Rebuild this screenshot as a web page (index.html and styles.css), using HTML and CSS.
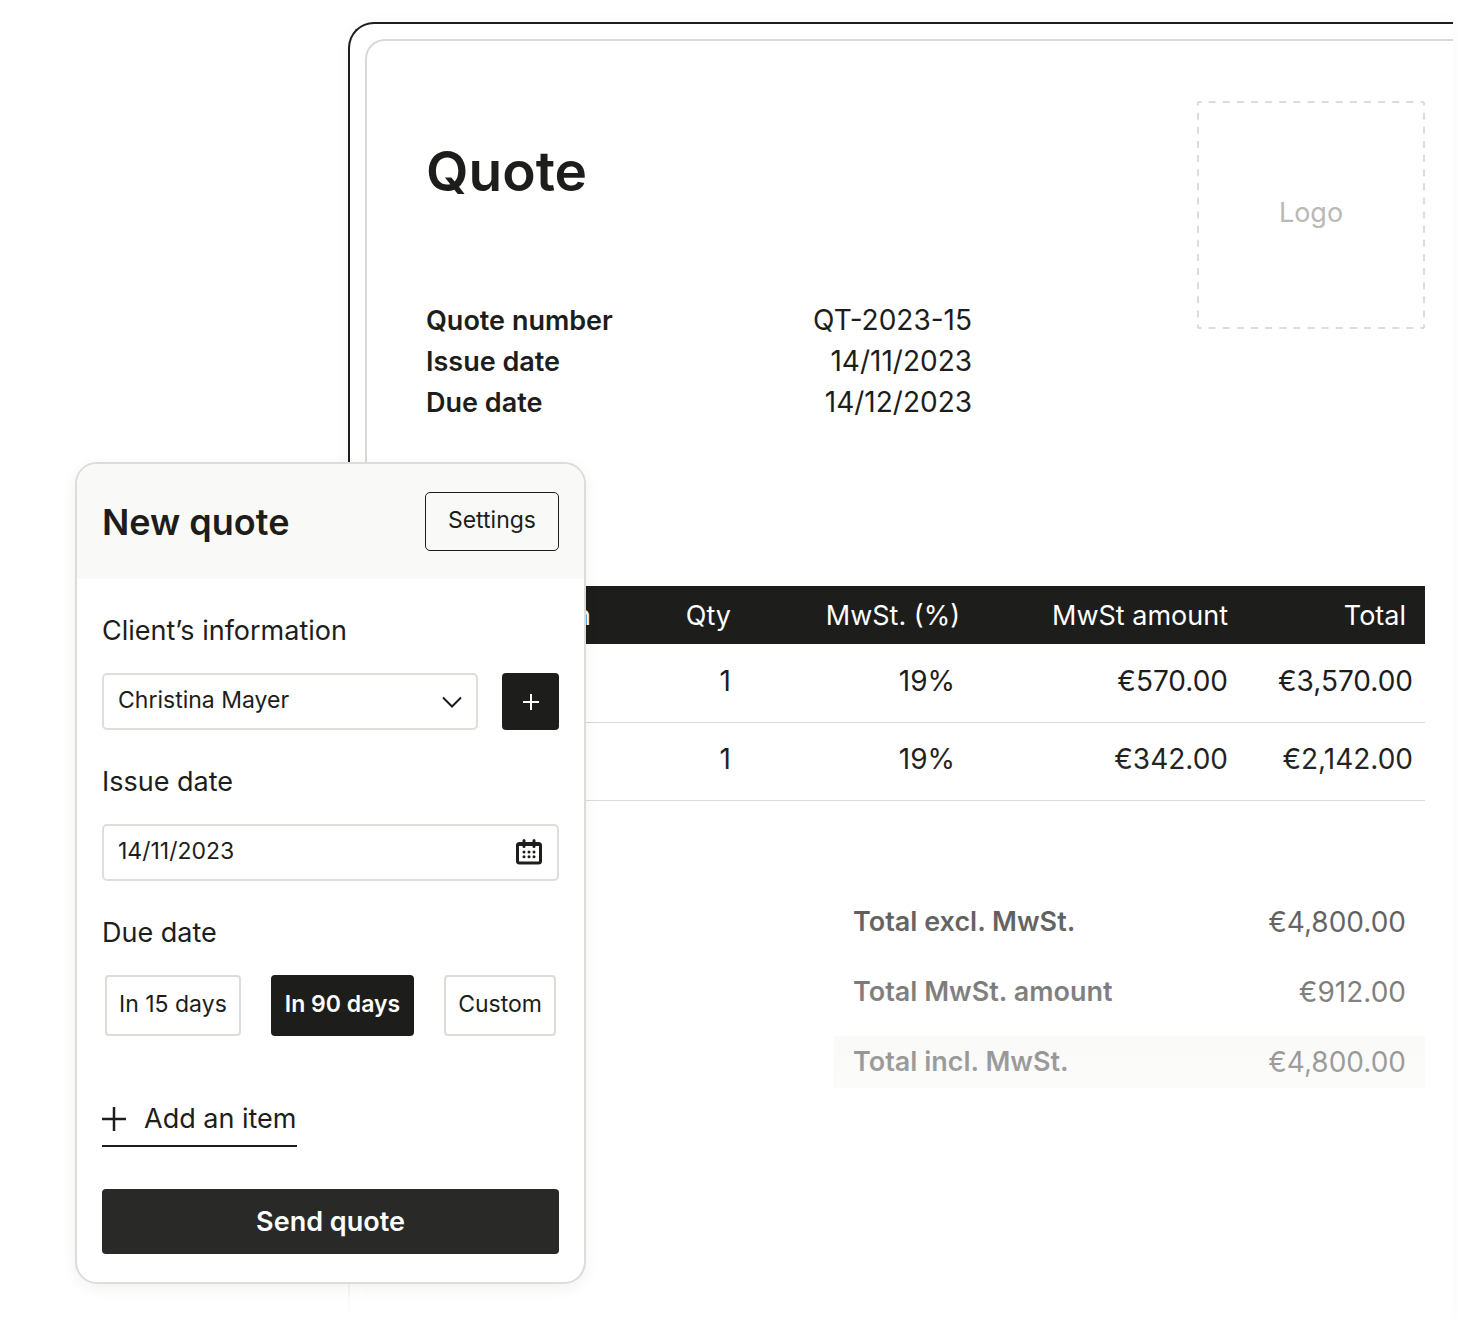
FILE: index.html
```html
<!DOCTYPE html>
<html lang="en">
  <head>
    <meta charset="utf-8">
    <title>New quote</title>
    <link rel="stylesheet" href="styles.css">
  </head>

  <body>
    <div class="stage">

      <main class="sheet">
        <div class="page">

          <div class="page-top">
            <div class="intro">
              <h1>Quote</h1>
              <dl class="details">
                <div><dt>Quote number</dt><dd>QT-2023-15</dd></div>
                <div><dt>Issue date</dt><dd>14/11/2023</dd></div>
                <div><dt>Due date</dt><dd>14/12/2023</dd></div>
              </dl>
            </div>
            <div class="logo-box">
              <svg class="logo-frame" viewBox="0 0 228 228" aria-hidden="true">
                <path d="M1 1H227M227 1V227M227 227H1M1 227V1" />
              </svg>
              <span>Logo</span>
            </div>
          </div>

          <table class="items">
            <colgroup>
              <col>
              <col class="col-qty">
              <col class="col-rate">
              <col class="col-vat">
              <col class="col-total">
            </colgroup>
            <thead>
              <tr>
                <th class="desc">Description</th>
                <th>Qty</th>
                <th>MwSt. (%)</th>
                <th>MwSt amount</th>
                <th class="total">Total</th>
              </tr>
            </thead>
            <tbody>
              <tr>
                <td></td>
                <td>1</td>
                <td class="rate">19%</td>
                <td>€570.00</td>
                <td class="total">€3,570.00</td>
              </tr>
              <tr>
                <td></td>
                <td>1</td>
                <td class="rate">19%</td>
                <td>€342.00</td>
                <td class="total">€2,142.00</td>
              </tr>
            </tbody>
          </table>

          <dl class="totals">
            <div><dt>Total excl. MwSt.</dt><dd>€4,800.00</dd></div>
            <div><dt>Total MwSt. amount</dt><dd>€912.00</dd></div>
            <div class="grand"><dt>Total incl. MwSt.</dt><dd>€4,800.00</dd></div>
          </dl>

        </div>
      </main>

      <form class="card">
        <div class="card-head">
          <h2>New quote</h2>
          <button type="button" class="btn-settings">Settings</button>
        </div>

        <div class="card-body">
          <div class="group">
            <label for="client">Client’s information</label>
            <div class="row">
              <div class="field">
                <select id="client">
                  <option>Christina Mayer</option>
                </select>
                <svg class="chevron" viewBox="0 0 20 12" aria-hidden="true"><path d="M1 1.500L10 10.500L19 1.500" /></svg>
              </div>
              <button type="button" class="btn-plus" aria-label="Add client">
                <svg viewBox="0 0 18 18" aria-hidden="true"><path d="M9 1V17M1 9H17" /></svg>
              </button>
            </div>
          </div>

          <div class="group">
            <label for="issue">Issue date</label>
            <div class="field">
              <input type="text" id="issue" value="14/11/2023">
              <svg class="calendar" viewBox="0 0 26 26" aria-hidden="true">
                <rect x="1.500" y="4.500" width="23" height="19.500" rx="2" />
                <path d="M2 5.500H24M8 1.500V7.500M18 1.500V7.500" />
                <g>
                  <circle cx="8" cy="13" r="1.500" /><circle cx="13" cy="13" r="1.500" /><circle cx="18" cy="13" r="1.500" />
                  <circle cx="8" cy="17.700" r="1.500" /><circle cx="13" cy="17.700" r="1.500" /><circle cx="18" cy="17.700" r="1.500" />
                </g>
              </svg>
            </div>
          </div>

          <div class="group" role="group" aria-labelledby="due">
            <div class="label" id="due">Due date</div>
            <div class="options">
              <button type="button">In 15 days</button>
              <button type="button" class="active" aria-pressed="true">In 90 days</button>
              <button type="button">Custom</button>
            </div>
          </div>

          <div class="actions">
            <a href="#item" class="add-item">
              <svg viewBox="0 0 24 24" aria-hidden="true"><path d="M12 0V24M0 12H24" /></svg>
              Add an item
            </a>
            <button type="submit" class="btn-send">Send quote</button>
          </div>
        </div>
      </form>

    </div>
  </body>
</html>
```

FILE: styles.css
```css
* { box-sizing: border-box; }
body {
  margin: 0;
  background: #fff;
  color: #1d1d1b;
  font-family: Inter, "Liberation Sans", sans-serif;
  font-size: 27px;
  line-height: 30px;
}
h1, h2, dl, dd { margin: 0; font-weight: 600; }
dt { font-weight: 600; }
dd { font-size: 28px; font-weight: 400; }
button, input, select { font: inherit; color: inherit; margin: 0; }
button { cursor: pointer; }
svg { display: block; fill: none; stroke: currentColor; }

.stage {
  position: relative;
  min-height: 100vh;
  padding: 22px 5px 0 348px;
  overflow: hidden;
}

/* document */
.sheet {
  position: relative;
  min-height: calc(100vh - 22px);
  padding: 15px 0 0 15px;
  border: 2px solid #1d1d1b;
  border-width: 2px 0 0 2px;
  border-top-left-radius: 26px;
  box-shadow: 0 0 16px rgba(0, 0, 0, 0.03);
}
/* fades the document out towards the bottom */
.sheet::after {
  content: "";
  position: absolute;
  top: 721px;
  right: 0;
  bottom: 0;
  left: -20px;
  background: linear-gradient(rgba(255, 255, 255, 0), #fff 570px);
  pointer-events: none;
}
.page {
  min-height: calc(100vh - 39px);
  padding: 60px 28px 0 59px;
  border: 2px solid #d9d9d6;
  border-width: 2px 0 0 2px;
  border-top-left-radius: 20px;
}
.page-top {
  display: flex;
  justify-content: space-between;
  align-items: flex-start;
}
.intro { width: 546px; padding-top: 40px; }
h1 { font-size: 55px; line-height: 60px; }
.details { margin-top: 99px; line-height: 41px; }
.details div, .totals div { display: flex; justify-content: space-between; }

.logo-box {
  position: relative;
  display: grid;
  place-items: center;
  width: 228px;
  height: 228px;
  padding-bottom: 4px;
  color: #b9b9b6;
}
.logo-frame {
  position: absolute;
  inset: 0;
  stroke: #dcdcd9;
  stroke-width: 2;
  stroke-dasharray: 7 7.125;
  stroke-dashoffset: 3.5;
}

.items {
  width: 100%;
  margin-top: 163px;
  border-collapse: collapse;
  table-layout: fixed;
}
.col-qty { width: 99px; }
.col-rate { width: 229px; }
.col-vat { width: 268px; }
.col-total { width: 197px; }
.items th {
  height: 58px;
  padding: 2px 0 0;
  background: #1d1d1b;
  color: #fff;
  font-weight: 400;
  text-align: right;
}
.items .desc { padding-left: 19px; text-align: left; }
.items td {
  height: 78px;
  padding: 0 0 4px;
  border-bottom: 1px solid #d9d9d6;
  font-size: 28px;
  text-align: right;
}
.items .rate { padding-right: 5px; }
.items th.total { padding-right: 19px; }
.items td.total { padding-right: 12px; }

.totals {
  display: grid;
  gap: 18px;
  width: 591px;
  margin: 95px 0 0 auto;
}
.totals div { padding: 0 19px; line-height: 52px; }
.totals .grand { background: #f5f5f3; }

/* quote form */
.card {
  position: absolute;
  top: 462px;
  left: 75px;
  width: 511px;
  border: 2px solid #dcdcd9;
  border-radius: 22px;
  background: #fff;
  box-shadow: 0 4px 16px rgba(0, 0, 0, 0.06);
  overflow: hidden;
}
.card-head {
  display: flex;
  justify-content: space-between;
  align-items: center;
  height: 115px;
  padding: 0 25px;
  background: #f9f9f8;
}
h2 { font-size: 36px; line-height: 40px; }
.btn-settings {
  height: 59px;
  padding: 0 22px 4px;
  border: 1px solid #1d1d1b;
  border-radius: 5px;
  background: none;
  font-size: 23px;
}
.card-body {
  display: flex;
  flex-direction: column;
  gap: 37px;
  padding: 37px 25px 28px;
}
.group { display: grid; gap: 27px; }
.row { display: flex; gap: 24px; }
.field { position: relative; flex: 1; }
.field input, .field select {
  display: block;
  width: 100%;
  height: 57px;
  padding: 0 14px 3px;
  border: 2px solid #dededb;
  border-radius: 5px;
  background: #fff;
  font-size: 23px;
  appearance: none;
}
.chevron, .calendar { position: absolute; pointer-events: none; }
.chevron {
  top: 23px;
  right: 16px;
  width: 20px;
  height: 12px;
  stroke-width: 2;
}
.calendar {
  top: 15px;
  right: 17px;
  width: 26px;
  height: 26px;
  stroke-width: 3;
  stroke-linecap: round;
}
.calendar g { fill: currentColor; stroke: none; }
.btn-plus {
  display: grid;
  place-items: center;
  width: 57px;
  height: 57px;
  padding: 0;
  border: 0;
  border-radius: 4px;
  background: #1d1d1b;
  color: #fff;
}
.btn-plus svg { width: 18px; height: 18px; stroke-width: 2; }

.options { display: flex; justify-content: space-between; padding: 0 3px; }
.options button {
  height: 61px;
  padding: 0 12px 4px;
  border: 2px solid #dcdcd9;
  border-radius: 4px;
  background: #fff;
  font-size: 23px;
}
.options .active {
  border-color: #1d1d1b;
  background: #1d1d1b;
  color: #fff;
  font-weight: 600;
}

.actions {
  display: flex;
  flex-direction: column;
  align-items: flex-start;
  gap: 42px;
  padding-top: 28px;
}
.add-item {
  display: flex;
  align-items: center;
  gap: 18px;
  padding-bottom: 8px;
  border-bottom: 2px solid #1d1d1b;
  color: inherit;
  line-height: 36px;
  text-decoration: none;
}
.add-item svg { width: 24px; height: 24px; stroke-width: 2.5; }
.btn-send {
  width: 100%;
  height: 65px;
  border: 0;
  border-radius: 4px;
  background: #292927;
  color: #fff;
  font-weight: 600;
}
```
